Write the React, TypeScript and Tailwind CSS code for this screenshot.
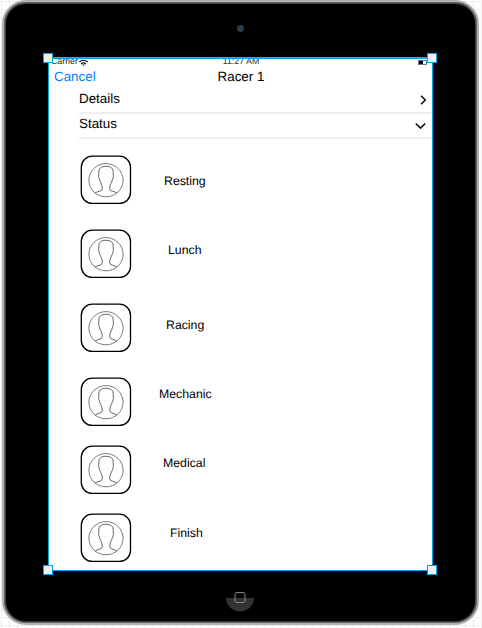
import React from "react";

const rows = [
  { label: "Resting", gap: "mt-[17px]", shift: "pl-[33px]", drop: "pt-[17px]" },
  { label: "Lunch", gap: "mt-[25px]", shift: "pl-[37px]", drop: "pt-[12px]" },
  { label: "Racing", gap: "mt-[25px]", shift: "pl-[35px]", drop: "pt-[13px]" },
  { label: "Mechanic", gap: "mt-[25px]", shift: "pl-[28px]", drop: "pt-[8px]" },
  { label: "Medical", gap: "mt-[19px]", shift: "pl-[32px]", drop: "pt-[9px]" },
  { label: "Finish", gap: "mt-[19px]", shift: "pl-[39px]", drop: "pt-[11px]" },
];

function Avatar() {
  return (
    <svg className="block h-[49px] w-[51px] shrink-0 overflow-visible" viewBox="0 -1 51 49" fill="none">
      <rect x="1.3" y="0.2" width="49.2" height="47.2" rx="11" stroke="#000" strokeWidth="1.3" />
      <ellipse cx="26" cy="24.2" rx="17.100" ry="16.600" stroke="#444" strokeWidth="0.7" />
      <path
        d="M15.200 37.200C17.500 34.700 21.700 36 22.200 33C22.500 30.500 21.600 28.500 20.700 26.500C19.700 24 19.200 23.500 18.900 21.500C18.200 20 18.900 18.500 18.800 16.500C18.600 12.500 21 10.300 26 10.300S33.400 12.500 33.200 16.500C33.100 18.500 33.800 20 33.100 21.500C32.800 23.500 32.300 24 31.300 26.500C30.400 28.500 29.500 30.500 29.800 33C30.300 36 34.500 34.700 36.800 37.200"
        stroke="#222"
        strokeWidth="0.7"
      />
    </svg>
  );
}

function Handle({ place }: { place: string }) {
  return <div className={`absolute h-[10px] w-[10px] border border-[#0b9fe3] bg-[#f0f0f1] ${place}`} />;
}

export default function App() {
  return (
    <div className="h-[628px] w-[482px] overflow-hidden bg-white bg-[linear-gradient(to_right,#eeeeee_1px,transparent_1px),linear-gradient(to_bottom,#eeeeee_1px,transparent_1px)] bg-[size:8px_8px] bg-[position:1px_1px] pl-[2px] font-['Liberation_Sans',Arial,sans-serif] text-black [text-rendering:geometricPrecision]">
      <div className="flex h-[625px] w-[477px] flex-col items-center rounded-[24px] border-2 border-[#b0b0b0] bg-black shadow-[inset_0_0_0_1px_#666,inset_0_0_0_2px_#3c3c3c]">
        <div className="flex h-[55px] w-full shrink-0 justify-center pt-[23px]">
          <div className="mr-px flex h-[7px] w-[7px] items-center justify-center rounded-full bg-[#39393b]">
            <div className="h-[3px] w-[3px] rounded-full bg-[#064a83]" />
          </div>
        </div>
        <div className="relative h-[514px] w-[385px] shrink-0 border-x border-b border-[#0b9fe3] bg-white">
          <div className="flex h-[10px] items-start justify-between border-t border-[#8b8b8b] pl-[2px] pr-[5px] text-[8.8px] leading-[10px]">
            <div className="flex w-[56px] items-start">
              <span className="mt-[-2px] text-[#222]">Carrier</span>
              <svg className="ml-[1px] mt-[1px] h-[8px] w-[9px]" viewBox="0 0 9 8" fill="none" stroke="#111" strokeWidth="1.1">
                <path d="M.3 3Q4.500-.5 8.700 3M2 5Q4.500 2.800 7 5" />
                <path d="M3.200 5.500h2.600L4.500 7z" fill="#111" stroke="none" />
              </svg>
            </div>
            <span className="mt-[-2px] mr-[-4px] text-[#333]">11:27 AM</span>
            <div className="flex w-[56px] justify-end pt-[1px]">
              <div className="mt-[1px] h-[5px] w-[9px] border border-[#777] bg-white">
                <div className="h-full w-[4px] bg-black" />
              </div>
            </div>
          </div>
          <header className="flex h-[21px] items-center justify-between px-[5px] pb-[1px] text-[13.4px]">
            <span className="w-[80px] text-[#087eff]">Cancel</span>
            <span>Racer 1</span>
            <span className="w-[79px]" />
          </header>
          <div className="ml-[30px] flex h-[26px] items-center justify-between border-b-2 border-[#efefef] pr-[5px] text-[13.4px]">
            <span className="pb-[2px]">Details</span>
            <svg className="h-[10px] w-[10px]" viewBox="0 0 10 10" fill="none" stroke="#111" strokeWidth="1.6">
              <path d="M4 .8 8.300 5 4 9.200" />
            </svg>
          </div>
          <div className="ml-[30px] flex h-[25px] items-center justify-between border-b-2 border-[#efefef] pr-[6px] text-[13.4px]">
            <span className="pb-[3px]">Status</span>
            <svg className="h-[10px] w-[11px]" viewBox="0 0 11 10" fill="none" stroke="#111" strokeWidth="1.700">
              <path d="M.8 2.500 5.500 7 10.200 2.500" />
            </svg>
          </div>
          <main className="-mt-px pl-[31px]">
            {rows.map((r) => (
              <div key={r.label} className={`flex h-[49px] ${r.gap}`}>
                <Avatar />
                <span className={`text-[12.3px] leading-[18px] ${r.shift} ${r.drop}`}>{r.label}</span>
              </div>
            ))}
          </main>
          <div className="absolute inset-x-0 top-px h-px bg-[#0b9fe3]" />
          <Handle place="left-[-6px] top-[-4px]" />
          <Handle place="right-[-5px] top-[-4px]" />
          <Handle place="bottom-[-5px] left-[-6px]" />
          <Handle place="bottom-[-5px] right-[-5px]" />
        </div>
        <div className="flex flex-1 items-start justify-center pr-[2px] pt-[20px]">
          <svg className="h-[21px] w-[28px]" viewBox="0 0 28 21" fill="none">
            <path d="M0 7a14 13.500 0 0 0 28 0Z" fill="#333" />
            <rect x="9" y="1.500" width="10" height="10" rx="2" stroke="#888" />
          </svg>
        </div>
      </div>
    </div>
  );
}
